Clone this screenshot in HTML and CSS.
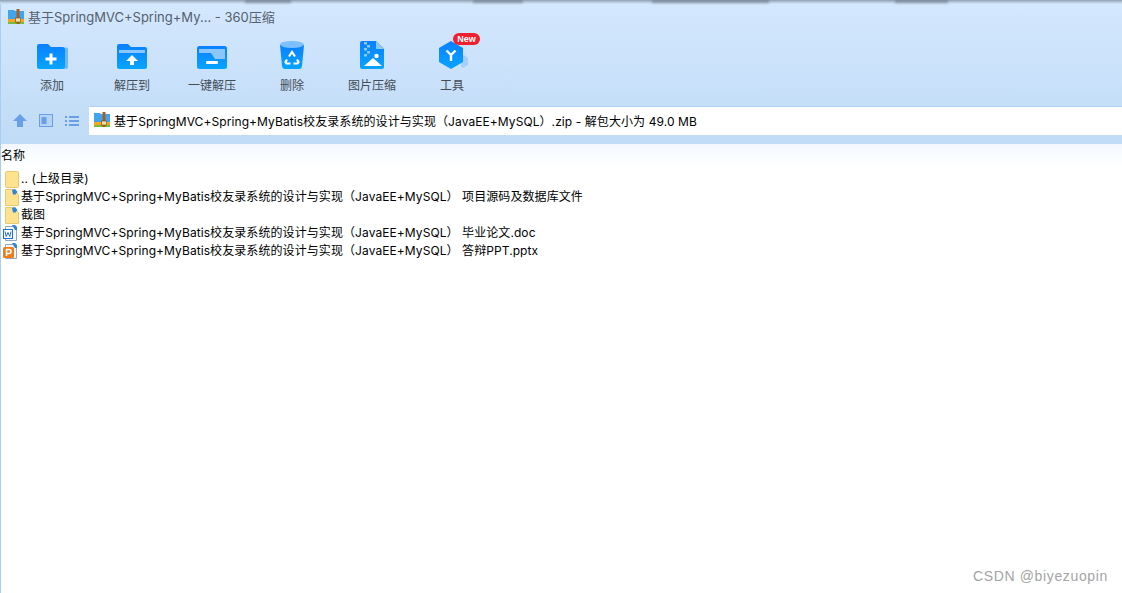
FILE: index.html
```html
<!DOCTYPE html>
<html lang="zh">
<head>
  <meta charset="UTF-8" />
  <title>360压缩</title>
  <link rel="stylesheet" href="styles.css">
</head>
<body>
  <div class="shadow-strip">
    <span class="sh sh1"></span>
    <span class="sh sh2"></span>
    <span class="sh sh3"></span>
    <span class="sh sh4"></span>
  </div>
  <div class="top">
    <div class="titlebar">
      <svg class="zip-icon" viewBox="0 0 16 16"><use href="#zip"/></svg>
      <span>基于SpringMVC+Spring+My... - 360压缩</span>
    </div>
    <div class="toolbar">
      <div class="tool tool-add">
        <svg viewBox="0 0 32 28" width="32" height="28">
          <path d="M29 6.500h1.500q1.500 0 1.500 1.500v18q0 2-2 2h-1.500z" fill="#6db8ff"/>
          <path d="M1 5q0-2 2-2h9l3 3h12q2 0 2 2v18q0 2-2 2H3q-2 0-2-2z" fill="url(#blue)"/>
          <path d="M9.500 16.500h4v-4h3v4h4v3h-4v4h-3v-4h-4z" fill="#fff"/>
        </svg>
        <span>添加</span>
      </div>
      <div class="tool tool-to">
        <svg viewBox="0 0 32 28" width="32" height="28">
          <path d="M1 5q0-2 2-2h9l3 3h14q2 0 2 2v18q0 2-2 2H3q-2 0-2-2z" fill="url(#blue)"/>
          <path d="M3 9h26v3H3z" fill="#8cc6ff"/>
          <path d="M16 14l6 6h-4v4h-4v-4h-4z" fill="#fff"/>
        </svg>
        <span>解压到</span>
      </div>
      <div class="tool tool-one">
        <svg viewBox="0 0 32 26" width="32" height="26">
          <rect x="1" y="3" width="30" height="23" rx="2.500" fill="url(#blue)"/>
          <path d="M3 6h26v10H19l-4-6H3z" fill="#8cc6ff"/>
          <rect x="10" y="18" width="12" height="3" rx="1" fill="#fff"/>
        </svg>
        <span>一键解压</span>
      </div>
      <div class="tool tool-del">
        <svg viewBox="0 0 26 30" width="26" height="30">
          <path d="M1 6l2 21q.3 3 3 3h14q2.700 0 3-3l2-21z" fill="url(#blue)"/>
          <ellipse cx="13" cy="5.500" rx="12" ry="3.500" fill="#7cc0ff"/>
          <path d="M10 17.500l3-4.500 3 4.500M18 20.500l1.500 2.500-1 1.500H14.500M11.500 24.500H7.500L6.500 23l1.500-2.500" fill="none" stroke="#fff" stroke-width="2.200"/>
        </svg>
        <span>删除</span>
      </div>
      <div class="tool tool-pic">
        <svg viewBox="0 0 26 30" width="26" height="30">
          <path d="M1 4q0-2 2-2h14l8 8v18q0 2-2 2H3q-2 0-2-2z" fill="url(#blue)"/>
          <path d="M17 2l8 8h-8z" fill="#8cc6ff"/>
          <path d="M5 3h3v2.500H5zM8 6h3v2.500H8zM5 9h3v2.500H5zM8 12h3v2.500H8zM5 15h3v2.500H5z" fill="#8cc6ff"/>
          <circle cx="17.500" cy="17" r="2.200" fill="#fff"/>
          <path d="M5 27l9-8 9 8z" fill="#fff"/>
        </svg>
        <span>图片压缩</span>
      </div>
      <div class="tool tool-kit">
        <svg viewBox="0 0 32 30" width="32" height="30">
          <path d="M25 17l2-1 4 3v7l-5 3-2-1z" fill="#a6d0fb"/>
          <path d="M14 2l12 7v14l-12 7-12-7V9z" fill="url(#blue)"/>
          <path d="M14 16v6M14 16l-4.500-4.500M14 16l4.500-4.500" stroke="#fff" stroke-width="2.400" fill="none"/>
        </svg>
        <span>工具</span>
        <b class="badge">New</b>
      </div>
    </div>
    <div class="navrow">
      <div class="nav-icons">
        <svg viewBox="0 0 14 13" width="14" height="13"><path d="M7 0l7 7h-4v6H4V7H0z" fill="#699ee8"/></svg>
        <svg viewBox="0 0 14 13" width="14" height="13">
          <rect x=".5" y=".5" width="13" height="12" fill="#b5d4f6" stroke="#699ee8"/>
          <rect x="2.500" y="3" width="5" height="7" fill="#699ee8"/>
        </svg>
        <svg viewBox="0 0 14 10" width="14" height="10"><path d="M0 0h2v2H0zM4 0h10v2H4zM0 4h2v2H0zM4 4h10v2H4zM0 8h2v2H0zM4 8h10v2H4z" fill="#699ee8"/></svg>
      </div>
      <div class="pathbar">
        <svg class="zip-icon" viewBox="0 0 16 16"><use href="#zip"/></svg>
        <span>基于SpringMVC+Spring+MyBatis校友录系统的设计与实现（JavaEE+MySQL）.zip - 解包大小为 49.0 MB</span>
      </div>
    </div>
  </div>
  <div class="listwrap">
    <div class="list-head">名称</div>
    <ul class="files">
      <li><svg viewBox="0 0 14 17"><use href="#sheet"/></svg>.. (上级目录)</li>
      <li><svg viewBox="0 0 14 17"><use href="#folder"/></svg>基于SpringMVC+Spring+MyBatis校友录系统的设计与实现（JavaEE+MySQL） 项目源码及数据库文件</li>
      <li><svg viewBox="0 0 14 17"><use href="#folder"/></svg>截图</li>
      <li class="doc"><svg viewBox="0 0 16 17">
        <path d="M3.500 1.500h8l3 3v11h-11z" fill="#f4f8fd" stroke="#8ea6c4"/>
        <path d="M10 0h3l2 2v3h-2z" fill="#2f86d8"/>
        <rect x="1.500" y="4.500" width="9" height="9" fill="#fff" stroke="#1f6fd0"/>
        <path d="M3 6.500l1.200 5 1.800-4 1.800 4 1.200-5" fill="none" stroke="#1f6fd0"/>
      </svg>基于SpringMVC+Spring+MyBatis校友录系统的设计与实现（JavaEE+MySQL） 毕业论文.doc</li>
      <li class="doc"><svg viewBox="0 0 16 17">
        <path d="M3.500 1.500h8l3 3v11h-11z" fill="#f4f8fd" stroke="#9aa8b8"/>
        <path d="M10 0h3l2 2v3h-2z" fill="#2f86d8"/>
        <rect x="1" y="4" width="11" height="11" rx="1.500" fill="#f07d1a"/>
        <path d="M4.500 13V6.500h2.500q2 0 2 2t-2 2H4.500" fill="none" stroke="#fff" stroke-width="1.500"/>
      </svg>基于SpringMVC+Spring+MyBatis校友录系统的设计与实现（JavaEE+MySQL） 答辩PPT.pptx</li>
    </ul>
  </div>
  <div class="watermark">CSDN @biyezuopin</div>

  <svg class="defs" width="0" height="0">
    <defs>
      <linearGradient id="blue" x1="0" y1="0" x2="0" y2="1">
        <stop offset="0" stop-color="#0a80ff"/>
        <stop offset="1" stop-color="#08a4ff"/>
      </linearGradient>
      <g id="zip">
        <path d="M0 1h6l1 1h9v9H0z" fill="#41a5ee"/>
        <rect x="0" y="10" width="16" height="3" fill="#f5a524"/>
        <rect x="0" y="13" width="16" height="2" fill="#79bb3c"/>
        <rect x="8.500" y="0" width="3" height="15" fill="#a85f22"/>
        <rect x="7.500" y="9" width="5" height="4" fill="#f6e2a8" stroke="#7c4513" stroke-width=".6"/>
      </g>
      <g id="sheet">
        <rect x=".5" y=".5" width="13" height="16" rx="1" fill="#fde28f" stroke="#e9c873"/>
      </g>
      <g id="folder">
        <path d="M.5.500h8l5 5v11H.5z" fill="#fde28f" stroke="#e9c873"/>
        <path d="M7 1l3-1 2.500 3-2 2.500H8z" fill="#2f86d8"/>
      </g>
    </defs>
  </svg>
</body>
</html>
```

FILE: styles.css
```css
html, body {
  margin: 0;
  padding: 0;
}
body {
  position: relative;
  width: 1122px;
  height: 593px;
  overflow: hidden;
  background: #fff;
  font-family: Inter, "Noto Sans CJK SC", sans-serif;
  color: #000;
}
.defs {
  position: absolute;
}
.shadow-strip {
  position: absolute;
  top: 0;
  left: 0;
  right: 0;
  height: 4px;
  background: linear-gradient(#8f9fb2, #b4c6da 50%, #d3e7fd);
}
.sh {
  position: absolute;
  top: 0;
  height: 4px;
  background: linear-gradient(#5d6976, #8b9aab 50%, #d3e7fd);
  filter: blur(1px);
}
.sh1 { left: 245px; width: 46px; }
.sh2 { left: 473px; width: 50px; }
.sh3 { left: 652px; width: 117px; }
.sh4 { left: 895px; width: 53px; }

.top {
  height: 144px;
  background: linear-gradient(#d4e8fe, #c0dbf6);
  border-left: 1px solid #a9cdf3;
  box-sizing: border-box;
}
.titlebar {
  height: 33px;
  box-sizing: border-box;
  padding-left: 7px;
  display: flex;
  align-items: center;
  gap: 4px;
  font-size: 13px;
  color: #55606c;
}
.zip-icon {
  width: 16px;
  height: 16px;
  flex: none;
}
.toolbar {
  height: 73px;
  display: flex;
  padding-left: 11px;
}
.tool {
  position: relative;
  width: 80px;
  display: flex;
  flex-direction: column;
  align-items: center;
  justify-content: flex-end;
  font-size: 12px;
  color: #444c55;
  padding-bottom: 13px;
  box-sizing: border-box;
}
.tool svg {
  margin-bottom: 7px;
}
.tool-kit svg {
  margin-left: 2px;
}
.badge {
  position: absolute;
  top: 0;
  left: 41px;
  width: 27px;
  height: 12px;
  border-radius: 6px;
  background: #f0202f;
  color: #fff;
  font: bold 9px/12px "Liberation Sans", sans-serif;
  text-align: center;
}
.navrow {
  display: flex;
  align-items: flex-start;
  height: 38px;
}
.nav-icons {
  width: 88px;
  height: 29px;
  padding-left: 12px;
  box-sizing: border-box;
  display: flex;
  align-items: center;
  gap: 12px;
}
.pathbar {
  flex: 1;
  height: 29px;
  background: #fff;
  border-top: 1px solid #b4d2f2;
  box-sizing: border-box;
  display: flex;
  align-items: center;
  gap: 4px;
  padding: 0 0 2px 5px;
  font-size: 12px;
  letter-spacing: .08px;
}
.listwrap {
  height: 449px;
  border-left: 1px solid #a9cdf3;
  box-sizing: border-box;
  background: linear-gradient(#f3f8fe, #fff 24px);
}
.list-head {
  height: 26px;
  font-size: 12px;
  line-height: 24px;
}
.files {
  list-style: none;
  margin: 0;
  padding: 0;
}
.files li {
  height: 18px;
  display: flex;
  align-items: center;
  font-size: 12px;
  line-height: 18px;
  letter-spacing: .08px;
  padding-left: 4px;
  white-space: pre;
}
.files svg {
  width: 14px;
  height: 17px;
  margin-right: 2px;
  flex: none;
}
.files .doc {
  padding-left: 1px;
}
.files .doc svg {
  width: 16px;
  margin-right: 3px;
}
.watermark {
  position: absolute;
  right: 14px;
  bottom: 9px;
  font: 14px "Liberation Sans", sans-serif;
  letter-spacing: .65px;
  color: #a4a4a4;
}
```
